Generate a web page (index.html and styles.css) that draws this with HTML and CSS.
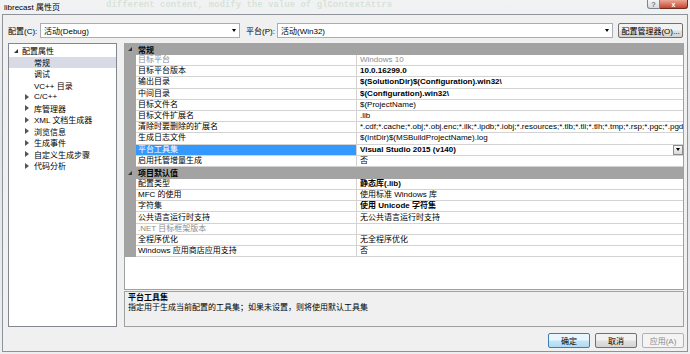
FILE: index.html
```html
<!DOCTYPE html>
<html lang="zh-CN">
<head>
    <meta charset="UTF-8">
    <title>librecast 属性页</title>
    <link rel="stylesheet" href="styles.css">
</head>
<body>
    <!-- Title bar -->
    <div class="titlebar">
        <span class="title">librecast 属性页</span>
        <span class="ghost">different content, modify the value of glContextAttrs</span>
        <div class="caption">
            <span class="cap-help">?</span>
            <span class="cap-close">x</span>
        </div>
    </div>

    <div class="client">
        <!-- Configuration bar -->
        <div class="config-bar">
            <label class="lbl-config">配置(C):</label>
            <div class="combo combo-config"><span>活动(Debug)</span><span class="arrow"></span></div>
            <label class="lbl-platform">平台(P):</label>
            <div class="combo combo-platform"><span>活动(Win32)</span><span class="arrow"></span></div>
            <button class="btn btn-mgr">配置管理器(O)...</button>
        </div>

        <div class="main">
            <!-- Tree -->
            <ul class="tree">
                <li class="root"><span class="tri-open"></span>配置属性</li>
                <li class="leaf selected">常规</li>
                <li class="leaf">调试</li>
                <li class="leaf">VC++ 目录</li>
                <li class="branch"><span class="tri-closed"></span>C/C++</li>
                <li class="branch"><span class="tri-closed"></span>库管理器</li>
                <li class="branch"><span class="tri-closed"></span>XML 文档生成器</li>
                <li class="branch"><span class="tri-closed"></span>浏览信息</li>
                <li class="branch"><span class="tri-closed"></span>生成事件</li>
                <li class="branch"><span class="tri-closed"></span>自定义生成步骤</li>
                <li class="branch"><span class="tri-closed"></span>代码分析</li>
            </ul>

            <div class="right">
                <!-- Property grid -->
                <div class="grid">
                    <div class="cat"><span class="tri-open"></span>常规</div>
                    <div class="row disabled"><span class="gut"></span><span class="name">目标平台</span><span class="val">Windows 10</span></div>
                    <div class="row"><span class="gut"></span><span class="name">目标平台版本</span><span class="val bold">10.0.16299.0</span></div>
                    <div class="row"><span class="gut"></span><span class="name">输出目录</span><span class="val bold">$(SolutionDir)$(Configuration).win32\</span></div>
                    <div class="row"><span class="gut"></span><span class="name">中间目录</span><span class="val bold">$(Configuration).win32\</span></div>
                    <div class="row"><span class="gut"></span><span class="name">目标文件名</span><span class="val">$(ProjectName)</span></div>
                    <div class="row"><span class="gut"></span><span class="name">目标文件扩展名</span><span class="val">.lib</span></div>
                    <div class="row"><span class="gut"></span><span class="name">清除时要删除的扩展名</span><span class="val">*.cdf;*.cache;*.obj;*.obj.enc;*.ilk;*.ipdb;*.iobj;*.resources;*.tlb;*.tli;*.tlh;*.tmp;*.rsp;*.pgc;*.pgd;*.meta;*.tlog;*.manifest;*.res;*.pch;*.exp;*.idb;*.rep;*.xdc;*.pdb</span></div>
                    <div class="row"><span class="gut"></span><span class="name">生成日志文件</span><span class="val">$(IntDir)$(MSBuildProjectName).log</span></div>
                    <div class="row sel"><span class="gut"></span><span class="name">平台工具集</span><span class="val bold">Visual Studio 2015 (v140)<span class="dd"></span></span></div>
                    <div class="row"><span class="gut"></span><span class="name">启用托管增量生成</span><span class="val">否</span></div>

                    <div class="cat"><span class="tri-open"></span>项目默认值</div>
                    <div class="row"><span class="gut"></span><span class="name">配置类型</span><span class="val bold">静态库(.lib)</span></div>
                    <div class="row"><span class="gut"></span><span class="name">MFC 的使用</span><span class="val">使用标准 Windows 库</span></div>
                    <div class="row"><span class="gut"></span><span class="name">字符集</span><span class="val bold">使用 Unicode 字符集</span></div>
                    <div class="row"><span class="gut"></span><span class="name">公共语言运行时支持</span><span class="val">无公共语言运行时支持</span></div>
                    <div class="row disabled"><span class="gut"></span><span class="name">.NET 目标框架版本</span><span class="val"></span></div>
                    <div class="row"><span class="gut"></span><span class="name">全程序优化</span><span class="val">无全程序优化</span></div>
                    <div class="row"><span class="gut"></span><span class="name">Windows 应用商店应用支持</span><span class="val">否</span></div>
                </div>

                <!-- Description -->
                <div class="desc">
                    <div class="desc-title">平台工具集</div>
                    <div>指定用于生成当前配置的工具集；如果未设置，则将使用默认工具集</div>
                </div>
            </div>
        </div>

        <!-- Dialog buttons -->
        <div class="actions">
            <button class="btn btn-default">确定</button>
            <button class="btn">取消</button>
            <button class="btn" disabled>应用(A)</button>
        </div>
    </div>
</body>
</html>
```

FILE: styles.css
```css
/* Window */
body {
    margin: 0;
    width: 690px;
    height: 354px;
    overflow: hidden;
    background: linear-gradient(to bottom, #f1f2f3, #e2e5e8 40%, #eceef0);
    font-family: "Liberation Sans", "Noto Sans CJK SC", sans-serif;
    font-size: 8px;
    color: #000;
}

.titlebar {
    height: 14px;
    display: flex;
    align-items: flex-start;
}

.title {
    padding: 3px 0 0 4px;
    line-height: 10px;
    white-space: nowrap;
}

.ghost {
    margin-left: 46px;
    padding-top: 1px;
    font-family: "Liberation Mono", monospace;
    font-weight: bold;
    font-size: 9px;
    line-height: 9px;
    color: rgba(110, 170, 110, 0.22);
    white-space: nowrap;
}

.caption {
    margin-left: auto;
    margin-right: 2px;
    display: flex;
}

.cap-help,
.cap-close {
    height: 9px;
    box-sizing: border-box;
    display: flex;
    align-items: center;
    justify-content: center;
    font-size: 7px;
    line-height: 7px;
    border: 1px solid #7d848c;
    border-top: 0;
}

.cap-help {
    width: 13px;
    color: #333;
    border-radius: 0 0 0 3px;
    background: linear-gradient(#f6f6f7, #d6d9de);
}

.cap-close {
    width: 28px;
    color: #fff;
    font-weight: bold;
    border-left: 0;
    border-color: #6e2b22;
    border-radius: 0 0 3px 0;
    background: linear-gradient(#e9a897, #c7452e);
}

.client {
    margin: 0 2px;
    height: 338px;
    box-sizing: border-box;
    border: 1px solid #8e9399;
    background-color: #f0f0f0;
    padding: 7px 3px 0 5px;
}

/* Configuration bar */
.config-bar {
    display: flex;
    align-items: center;
    height: 16px;
}

.lbl-config {
    width: 32px;
}

.lbl-platform {
    margin-left: 6px;
    width: 31px;
}

.combo {
    height: 15px;
    box-sizing: border-box;
    border: 1px solid #abadb3;
    background-color: #fff;
    display: flex;
    align-items: center;
    padding-left: 3px;
}

.combo-config {
    width: 200px;
}

.combo-platform {
    width: 336px;
}

.combo .arrow {
    margin-left: auto;
    margin-right: 3px;
    border: 2.5px solid transparent;
    border-top: 3px solid #000;
    border-bottom: 0;
}

.btn {
    height: 15px;
    width: 42px;
    box-sizing: border-box;
    padding: 0;
    font: inherit;
    color: #000;
    border: 1px solid #707070;
    border-radius: 2px;
    background: linear-gradient(#f2f2f2 45%, #e0e0e0 55%, #d4d4d4);
}

.btn-mgr {
    width: 65px;
    margin-left: 5px;
}

.btn-default {
    border-color: #3c7fb1;
    background: linear-gradient(#eaf6fd 45%, #c4e5f6 55%, #b0daf1);
}

.btn:disabled {
    color: #8a8a8a;
    border-color: #adb2b5;
    background: #f4f4f4;
}

/* Main area */
.main {
    display: flex;
    gap: 7px;
    margin-top: 5px;
    height: 284px;
}

.tree {
    width: 109px;
    box-sizing: border-box;
    margin: 0;
    padding: 1px 0 0;
    list-style: none;
    border: 1px solid #828790;
    background-color: #fff;
}

.tree li {
    height: 11.5px;
    display: flex;
    align-items: center;
    white-space: nowrap;
}

.tree .root {
    padding-left: 5px;
}

.tree .leaf {
    padding-left: 25px;
}

.tree .branch {
    padding-left: 16px;
}

.tree .selected {
    background-color: #d8dbe5;
}

.tri-open {
    width: 0;
    height: 0;
    margin-right: 4px;
    border-left: 4px solid transparent;
    border-bottom: 4px solid #333;
}

.tri-closed {
    width: 0;
    height: 0;
    margin-right: 5px;
    border-top: 3px solid transparent;
    border-bottom: 3px solid transparent;
    border-left: 4px solid #555;
}

.cat .tri-open {
    margin: 0 6px 0 3px;
}

.right {
    flex: 1;
    display: flex;
    flex-direction: column;
}

/* Property grid */
.grid {
    height: 247px;
    box-sizing: border-box;
    border: 1px solid #a0a0a0;
    border-top: 0;
    background-color: #fff;
}

.cat {
    height: 12px;
    display: flex;
    align-items: center;
    font-weight: bold;
    background-color: #a3a3a3;
}

.row {
    display: grid;
    grid-template-columns: 11px 221px 1fr;
    height: 11.2px;
}

.row .gut {
    background-color: #a3a3a3;
}

.row .name,
.row .val {
    display: flex;
    align-items: center;
    box-sizing: border-box;
    border-bottom: 1px solid #d3d3d3;
    white-space: nowrap;
    overflow: hidden;
    line-height: 10px;
}

.row .name {
    padding-left: 2px;
    border-right: 1px solid #d3d3d3;
}

.row .val {
    padding-left: 3px;
}

.row.disabled .name,
.row.disabled .val {
    color: #8d8d8d;
}

.bold {
    font-weight: bold;
}

.row.sel .name {
    background-color: #3399ff;
    color: #fff;
}

.dd {
    margin-left: auto;
    width: 10px;
    height: 10px;
    flex-shrink: 0;
    box-sizing: border-box;
    display: flex;
    align-items: center;
    justify-content: center;
    border: 1px solid #8c8c8c;
    background: linear-gradient(#f7f7f7, #dadada);
}

.dd::after {
    content: "";
    border: 2.5px solid transparent;
    border-top: 3px solid #000;
    border-bottom: 0;
}

/* Description */
.desc {
    margin-top: 1px;
    height: 36px;
    box-sizing: border-box;
    border: 1px solid #a0a0a0;
    padding: 1px 3px 0;
    line-height: 10px;
}

.desc-title {
    font-weight: bold;
}

/* Dialog buttons */
.actions {
    display: flex;
    justify-content: flex-end;
    gap: 5px;
    margin-top: 6px;
}
```
